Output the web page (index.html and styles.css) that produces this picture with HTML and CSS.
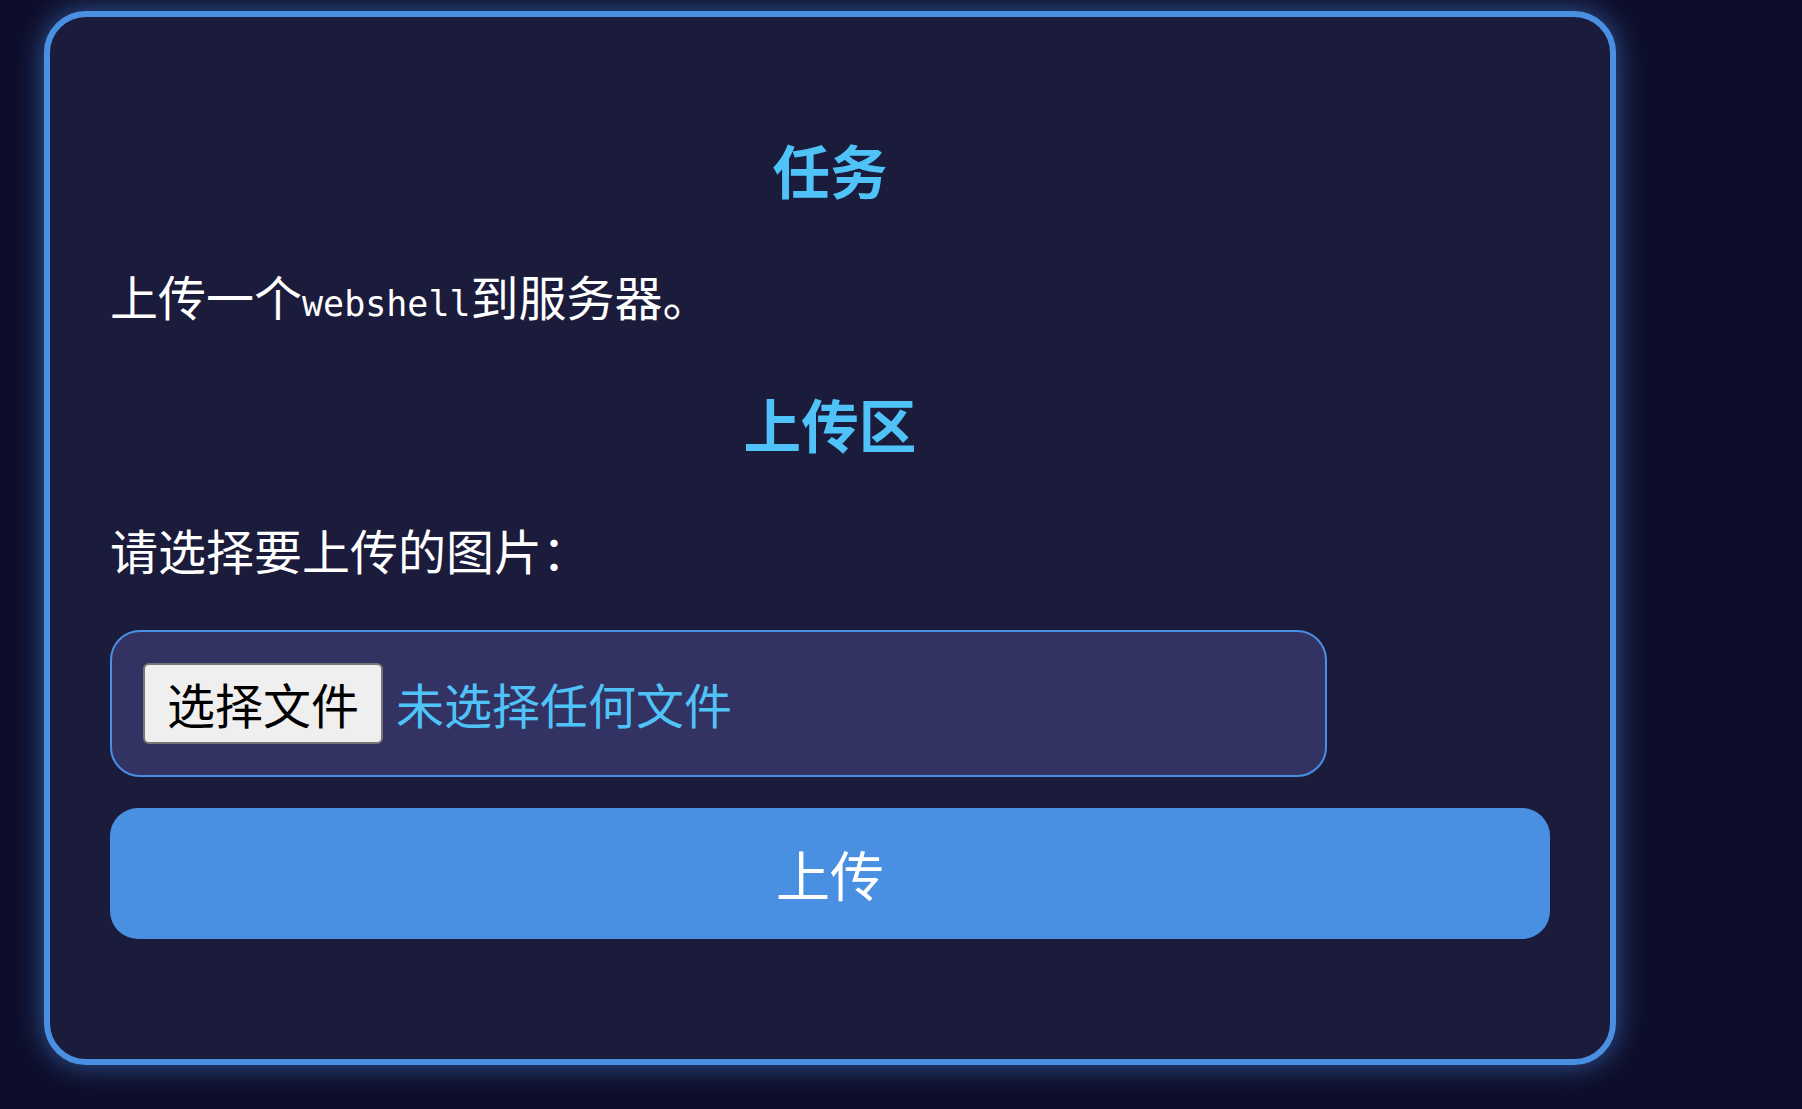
FILE: index.html
```html
<!DOCTYPE html>
<html lang="zh-CN">

<head>
    <meta charset="UTF-8">
    <meta name="viewport" content="width=device-width, initial-scale=1.0">
    <title>文件上传</title>

    <link rel="stylesheet" href="styles.css">
</head>

<body>

    <div class="card">
        <h2 class="title">任务</h2>
        <p class="text">上传一个<code>webshell</code>到服务器。</p>

        <h2 class="title">上传区</h2>
        <form class="upload-form" onsubmit="return false;">
            <p class="text">请选择要上传的图片：</p>

            <!-- fake file input so the label text stays the same -->
            <label class="file-box">
                <span class="file-btn">选择文件</span>
                <span class="file-name">未选择任何文件</span>
            </label>

            <button class="submit" type="submit">上传</button>
        </form>
    </div>

</body>

</html>
```

FILE: styles.css
```css
html {
    background-color: #0e0e2b;
    min-height: 100%;
}

body {
    margin: 0;
    min-height: 100vh;
    padding-bottom: 40px;
    font-family: "Noto Sans CJK SC", "Noto Sans", sans-serif;
    font-size: 48px;
    color: #ffffff;
}

.card {
    box-sizing: border-box;
    width: 1572px;
    margin: 11px 0 0 44px;
    padding: 60px 60px 120px;
    background-color: #1b1b3c;
    border: 6px solid #4a90e2;
    border-radius: 42px;
    box-shadow: 0 0 28px rgba(74, 144, 226, 0.6);
}

.title {
    color: #4fc3f7;
    font-size: 57.6px;
    font-weight: 700;
    line-height: 80px;
    text-align: center;
    margin: 52px 0 0;
}

.text {
    line-height: 72px;
    margin: 50px 0 0;
}

.text code {
    font-family: "DejaVu Sans Mono", monospace;
    font-size: 35px;
    line-height: 1;
}

.upload-form .text {
    margin-top: 50px;
}

.file-box {
    box-sizing: border-box;
    display: flex;
    align-items: center;
    width: 1217px;
    margin-top: 45px;
    padding: 31px;
    background-color: #333363;
    border: 2px solid #4a90e2;
    border-radius: 30px;
}

.file-btn {
    box-sizing: border-box;
    height: 81px;
    line-height: 77px;
    padding: 0 22px;
    color: #000000;
    background-color: #efefef;
    border: 2px solid #767676;
    border-radius: 6px;
}

.file-name {
    color: #4fc3f7;
    margin-left: 13px;
    line-height: 77px;
}

.submit {
    display: block;
    width: 100%;
    height: 131px;
    margin-top: 31px;
    background-color: #4a90e2;
    color: #ffffff;
    font-family: "Noto Sans CJK SC", "Noto Sans", sans-serif;
    font-size: 54px;
    border: none;
    border-radius: 28px;
}
```
